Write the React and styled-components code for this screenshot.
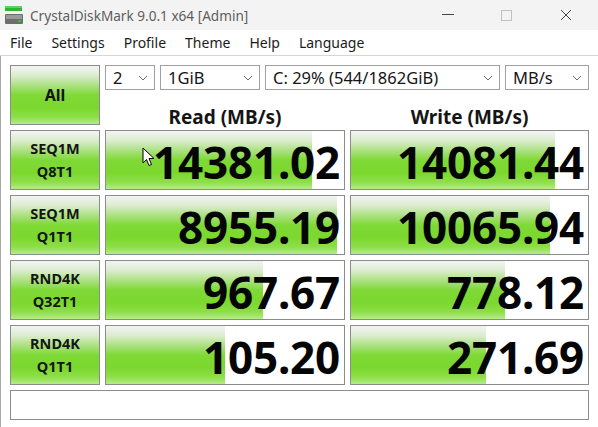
import React from 'react'
import styled, { createGlobalStyle } from 'styled-components'

const GlobalStyle = createGlobalStyle`
  html, body { margin: 0; padding: 0; background: #fff; }
  body { font-family: "Noto Sans", "Open Sans", Arial, sans-serif; }
`

const Window = styled.div`
  width: 598px;
  height: 427px;
  overflow: hidden;
  background: #fff;
  position: relative;
`

const TitleBar = styled.div`
  height: 30px;
  background: #f3f3f3;
  display: flex;
  align-items: center;
`

const AppIcon = styled.svg`
  width: 20px;
  height: 20px;
  margin: 0 6px 0 4px;
`

const Title = styled.div`
  flex: 1;
  font-size: 13.6px;
  color: #5e5e5e;
`

const Controls = styled.div`
  display: flex;
  height: 100%;
  padding-right: 3px;
`

const ControlButton = styled.div`
  width: 59px;
  display: flex;
  align-items: center;
  justify-content: center;
  opacity: ${p => (p.$disabled ? 0.35 : 1)};
`

const MenuBar = styled.div`
  height: 25px;
  display: flex;
  align-items: center;
  padding-left: 10px;
  gap: 19px;
  border-bottom: 1px solid #d6d6d6;
  font-size: 14px;
  color: #1b1b1b;
`

const Body = styled.div`
  border-left: 1px solid #a8a8a8;
  height: 371px;
  padding: 9px 9px 0 9px;
`

const Grid = styled.div`
  display: grid;
  grid-template-columns: 90px 240px 239px;
  grid-template-rows: 60px 60px 60px 60px 60px 30px;
  gap: 5px;
`

const greenGradient = `linear-gradient(to bottom,
  #f3f4f2 0%, #dcedd0 16%, #a8e07c 35%, #7fd936 50%, #7bd82e 72%, #8ede48 88%, #b4ed88 100%)`

const GreenButton = styled.div`
  box-sizing: border-box;
  border: 1px solid #8c8c8c;
  background: ${greenGradient};
  display: flex;
  flex-direction: column;
  align-items: center;
  justify-content: center;
  font-weight: 700;
  color: #151515;
  font-size: ${p => (p.$big ? '16px' : '14.5px')};
  line-height: 23px;
`

const TopPanel = styled.div`
  grid-column: 2 / span 2;
  display: flex;
  flex-direction: column;
`

const Selects = styled.div`
  display: flex;
  gap: 5px;
  height: 29px;
`

const Select = styled.div`
  box-sizing: border-box;
  width: ${p => p.$w}px;
  border: 1px solid #a0a0a0;
  background: #fff;
  display: flex;
  align-items: center;
  justify-content: space-between;
  padding: 0 6px 0 7px;
  font-size: 16.5px;
  color: #151515;
`

const Headers = styled.div`
  flex: 1;
  display: grid;
  grid-template-columns: 240px 239px;
  gap: 5px;
  align-items: center;
`

const HeaderText = styled.div`
  text-align: center;
  font-weight: 700;
  font-size: 19px;
  color: #151515;
  padding-top: 14px;
`

const Cell = styled.div`
  box-sizing: border-box;
  border: 1px solid #8c8c8c;
  background: #fff;
  position: relative;
  overflow: hidden;
`

const Bar = styled.div`
  position: absolute;
  left: 0;
  top: 0;
  bottom: 0;
  background: ${greenGradient};
`

const Value = styled.div`
  position: relative;
  height: 100%;
  display: flex;
  align-items: center;
  justify-content: flex-end;
  padding-right: 4px;
  font-weight: 700;
  font-size: 44px;
  letter-spacing: -0.2px;
  color: #050505;
  padding-top: 3px;
  box-sizing: border-box;
`

const Comment = styled.div`
  grid-column: 1 / span 3;
  box-sizing: border-box;
  border: 1px solid #8c8c8c;
  background: #fff;
`

const Cursor = styled.svg`
  position: absolute;
  left: 142px;
  top: 147px;
  width: 14px;
  height: 21px;
`

const Chevron = () => (
  <svg width="10" height="6" viewBox="0 0 10 6">
    <path d="M1 1 L5 5 L9 1" fill="none" stroke="#6a6a6a" strokeWidth="1" />
  </svg>
)

const rows = [
  { a: 'SEQ1M', b: 'Q8T1', read: '14381.02', rp: 86.5, write: '14081.44', wp: 86 },
  { a: 'SEQ1M', b: 'Q1T1', read: '8955.19', rp: 97, write: '10065.94', wp: 84 },
  { a: 'RND4K', b: 'Q32T1', read: '967.67', rp: 66, write: '778.12', wp: 65 },
  { a: 'RND4K', b: 'Q1T1', read: '105.20', rp: 50, write: '271.69', wp: 57 },
]

const App = () => {
  return (
    <Window>
      <GlobalStyle />
      <TitleBar>
        <AppIcon viewBox="0 0 20 20">
          <rect x="1" y="1" width="17" height="5" fill="#2fb52f" />
          <rect x="1" y="1" width="17" height="2" fill="#5fd35f" />
          <rect x="1" y="9" width="18" height="10" rx="1" fill="#6e6e6e" />
          <rect x="2" y="10" width="16" height="4" fill="#9a9a9a" />
          <rect x="14" y="15" width="3" height="2" fill="#35c035" />
        </AppIcon>
        <Title>CrystalDiskMark 9.0.1 x64 [Admin]</Title>
        <Controls>
          <ControlButton>
            <svg width="12" height="2" viewBox="0 0 12 2"><rect width="12" height="1" fill="#444" /></svg>
          </ControlButton>
          <ControlButton $disabled>
            <svg width="11" height="11" viewBox="0 0 11 11"><rect x="0.5" y="0.5" width="10" height="10" fill="none" stroke="#666" /></svg>
          </ControlButton>
          <ControlButton>
            <svg width="12" height="12" viewBox="0 0 12 12"><path d="M1 1 L11 11 M11 1 L1 11" stroke="#444" strokeWidth="1" /></svg>
          </ControlButton>
        </Controls>
      </TitleBar>
      <MenuBar>
        <span>File</span>
        <span>Settings</span>
        <span>Profile</span>
        <span>Theme</span>
        <span>Help</span>
        <span>Language</span>
      </MenuBar>
      <Body>
        <Grid>
          <GreenButton $big>All</GreenButton>
          <TopPanel>
            <Selects>
              <Select $w={50}><span>2</span><Chevron /></Select>
              <Select $w={100}><span>1GiB</span><Chevron /></Select>
              <Select $w={235}><span>C: 29% (544/1862GiB)</span><Chevron /></Select>
              <Select $w={84}><span>MB/s</span><Chevron /></Select>
            </Selects>
            <Headers>
              <HeaderText>Read (MB/s)</HeaderText>
              <HeaderText>Write (MB/s)</HeaderText>
            </Headers>
          </TopPanel>
          {rows.map((r, i) => (
            <React.Fragment key={i}>
              <GreenButton>
                <span>{r.a}</span>
                <span>{r.b}</span>
              </GreenButton>
              <Cell>
                <Bar style={{ width: r.rp + '%' }} />
                <Value>{r.read}</Value>
              </Cell>
              <Cell>
                <Bar style={{ width: r.wp + '%' }} />
                <Value>{r.write}</Value>
              </Cell>
            </React.Fragment>
          ))}
          <Comment />
        </Grid>
      </Body>
      <Cursor viewBox="0 0 14 21">
        <path d="M1 1 L1 16 L4.5 12.5 L7 18.5 L9.5 17.5 L7 11.5 L12 11.5 Z" fill="#fff" stroke="#000" strokeWidth="1" strokeLinejoin="round" />
      </Cursor>
    </Window>
  )
}

export default App
